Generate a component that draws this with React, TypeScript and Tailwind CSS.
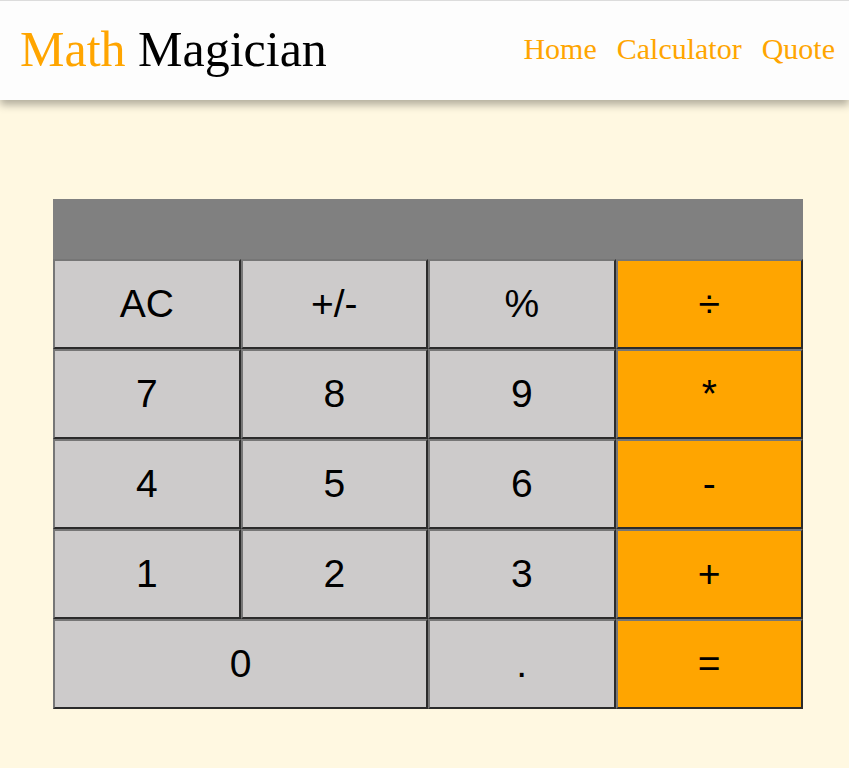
import React from 'react';

const keys: { label: string; op?: boolean; wide?: boolean }[] = [
  { label: 'AC' }, { label: '+/-' }, { label: '%' }, { label: '÷', op: true },
  { label: '7' }, { label: '8' }, { label: '9' }, { label: '*', op: true },
  { label: '4' }, { label: '5' }, { label: '6' }, { label: '-', op: true },
  { label: '1' }, { label: '2' }, { label: '3' }, { label: '+', op: true },
  { label: '0', wide: true }, { label: '.' }, { label: '=', op: true },
];

export default function App() {
  return (
    <div className="min-h-[768px] bg-[#fff8e1]">
      {/* Header */}
      <header className="flex h-[100px] items-center justify-between border-t border-[#dcdcdc] bg-[#fdfdfd] pl-5 pr-[14px] shadow-[0_5px_8px_rgba(0,0,0,0.3)] font-['Liberation_Serif',serif]">
        <h1 className="-mt-[3px] text-[50px] leading-none">
          <span className="text-[#ffa500]">Math</span> <span className="text-black">Magician</span>
        </h1>
        <nav className="-mt-[4px] flex gap-5 text-[30px] text-[#ffa500]">
          <a href="#">Home</a>
          <a href="#">Calculator</a>
          <a href="#">Quote</a>
        </nav>
      </header>

      {/* Calculator */}
      <div className="ml-[53px] mt-[99px] w-[750px] font-['Liberation_Sans',Arial,sans-serif]">
        <div className="h-[60px] bg-[#808080]" />
        <div className="grid grid-cols-4">
          {keys.map((k) => (
            <button
              key={k.label}
              className={`h-[90px] border-2 border-t-[#767676] border-l-[#767676] border-r-[#2b2b2b] border-b-[#2b2b2b] text-[39px] text-black ${
                k.op ? 'bg-[#ffa500]' : 'bg-[#cdcbcb]'
              } ${k.wide ? 'col-span-2' : ''}`}
            >
              {k.label}
            </button>
          ))}
        </div>
      </div>
    </div>
  );
}
